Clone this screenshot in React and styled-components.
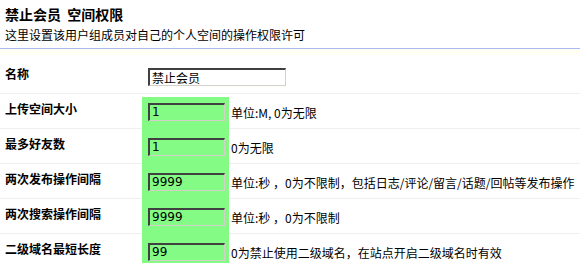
import React from 'react';
import styled, { createGlobalStyle } from 'styled-components';

const GlobalStyle = createGlobalStyle`
  html, body {
    margin: 0;
    padding: 0;
    background: #ffffff;
  }
  body {
    font-family: "Noto Sans CJK SC", "DejaVu Sans", sans-serif;
    font-size: 12px;
    color: #000000;
  }
`;

const rows = [
  { label: '上传空间大小', value: '1', hint: '单位:M, 0为无限' },
  { label: '最多好友数', value: '1', hint: '0为无限' },
  {
    label: '两次发布操作间隔',
    value: '9999',
    hint: '单位:秒 ，0为不限制，包括日志/评论/留言/话题/回帖等发布操作',
  },
  { label: '两次搜索操作间隔', value: '9999', hint: '单位:秒 ，0为不限制' },
  {
    label: '二级域名最短长度',
    value: '99',
    hint: '0为禁止使用二级域名，在站点开启二级域名时有效',
  },
];

const App = () => {
  return (
    <>
      <GlobalStyle />
      <StyledPage>
        <StyledHead>
          <StyledTitle>禁止会员&nbsp;&nbsp;空间权限</StyledTitle>
          <StyledDesc>这里设置该用户组成员对自己的个人空间的操作权限许可</StyledDesc>
        </StyledHead>
        <StyledRule />
        <StyledForm>
          <StyledLabel>名称</StyledLabel>
          <StyledWideCell>
            <StyledInput $wide defaultValue="禁止会员" />
          </StyledWideCell>
          {rows.map((row, i) => (
            <React.Fragment key={row.label}>
              <StyledLabel>{row.label}</StyledLabel>
              <StyledInputCell $first={i === 0}>
                <StyledInput defaultValue={row.value} />
              </StyledInputCell>
              <StyledHint>{row.hint}</StyledHint>
            </React.Fragment>
          ))}
        </StyledForm>
      </StyledPage>
    </>
  );
};

const StyledPage = styled.div`
  width: 580px;
  height: 263px;
  overflow: hidden;
`;

const StyledHead = styled.div`
  box-sizing: border-box;
  padding: 4px 5px 0;
  height: 48px;
`;

const StyledTitle = styled.h3`
  margin: 0;
  font-size: 14px;
  line-height: 20px;
  font-weight: bold;
`;

const StyledDesc = styled.p`
  margin: 2px 0 0;
  font-size: 12px;
  line-height: 17px;
`;

const StyledRule = styled.div`
  height: 1px;
  background: #a8bbf5;
  border-bottom: 6px solid #fffff3;
`;

const StyledForm = styled.div`
  display: grid;
  grid-template-columns: 142px 87px 1fr;
  grid-auto-rows: 35px;
  margin-top: 4px;
`;

const StyledLabel = styled.div`
  padding: 8px 0 0 5px;
  font-weight: bold;
  font-size: 12px;
  line-height: 14px;
  border-bottom: 1px solid #efefef;
`;

const StyledWideCell = styled.div`
  grid-column: 2 / 4;
  display: flex;
  align-items: center;
  padding: 2px 0 0 6px;
  border-bottom: 1px solid #efefef;
`;

const StyledInputCell = styled.div`
  display: flex;
  align-items: center;
  padding: 0 0 0 6px;
  background: ${(p) =>
    p.$first
      ? 'linear-gradient(to bottom, #ffffff 3px, #84fb84 3px)'
      : '#84fb84'};
`;

const StyledHint = styled.div`
  display: flex;
  align-items: center;
  padding: 2px 0 0 2px;
  font-size: 12px;
  white-space: nowrap;
  border-bottom: 1px solid #efefef;
`;

const StyledInput = styled.input`
  box-sizing: border-box;
  width: ${(p) => (p.$wide ? '138px' : '77px')};
  height: 18px;
  padding: 0 2px;
  margin: 0;
  font-family: "DejaVu Sans", "Noto Sans CJK SC", sans-serif;
  font-size: 12px;
  color: #000000;
  background: ${(p) => (p.$wide ? '#ffffff' : 'transparent')};
  border-style: solid;
  border-width: 2px 1px 1px 2px;
  border-color: #404040 #d4d0c8 #d4d0c8 #404040;
  outline: none;
`;

export default App;
